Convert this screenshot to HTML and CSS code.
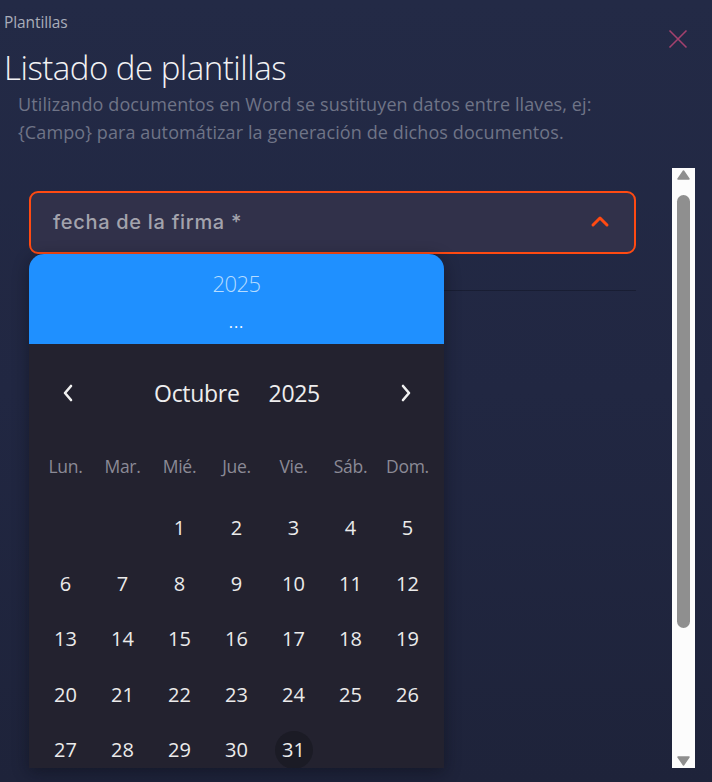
FILE: index.html
```html
<!DOCTYPE html>
<html lang="es">
<head>
<meta charset="utf-8">
<title>Plantillas</title>
<link rel="stylesheet" href="styles.css">
</head>
<body>
<div class="page">
  <header class="head">
    <div class="crumb-row">
      <span class="crumb">Plantillas</span>
      <button class="close" aria-label="Cerrar">
        <svg width="20" height="20" viewBox="0 0 20 20"><path d="M1.5 1.5 L18.5 18.5 M18.5 1.5 L1.5 18.5" stroke="#a3416e" stroke-width="1.6" fill="none"/></svg>
      </button>
    </div>
    <h1 class="title">Listado de plantillas</h1>
    <p class="desc">Utilizando documentos en Word se sustituyen datos entre llaves, ej:<br>{Campo} para automátizar la generación de dichos documentos.</p>
  </header>

  <section class="body">
    <div class="content">
      <div class="field">
        <span class="field-label">fecha de la firma *</span>
        <svg class="chev" width="20" height="14" viewBox="0 0 20 14"><polyline points="3,11 10,4 17,11" stroke="#ff4a12" stroke-width="3" fill="none" stroke-linecap="round" stroke-linejoin="round"/></svg>
      </div>
      <div class="divider"></div>

      <div class="picker">
        <div class="picker-head">
          <div class="ph-year">2025</div>
          <div class="ph-date">...</div>
        </div>
        <div class="picker-body">
          <div class="nav">
            <svg class="nav-btn" width="14" height="20" viewBox="0 0 14 20"><polyline points="10,3 4,10 10,17" stroke="#f0f0f0" stroke-width="2.6" fill="none" stroke-linecap="round" stroke-linejoin="round"/></svg>
            <div class="nav-title"><span>Octubre</span><span>2025</span></div>
            <svg class="nav-btn" width="14" height="20" viewBox="0 0 14 20"><polyline points="4,3 10,10 4,17" stroke="#f0f0f0" stroke-width="2.6" fill="none" stroke-linecap="round" stroke-linejoin="round"/></svg>
          </div>
          <div class="week">
            <span>Lun.</span><span>Mar.</span><span>Mié.</span><span>Jue.</span><span>Vie.</span><span>Sáb.</span><span>Dom.</span>
          </div>
          <div class="days">
            <span></span><span></span><span>1</span><span>2</span><span>3</span><span>4</span><span>5</span>
            <span>6</span><span>7</span><span>8</span><span>9</span><span>10</span><span>11</span><span>12</span>
            <span>13</span><span>14</span><span>15</span><span>16</span><span>17</span><span>18</span><span>19</span>
            <span>20</span><span>21</span><span>22</span><span>23</span><span>24</span><span>25</span><span>26</span>
            <span>27</span><span>28</span><span>29</span><span>30</span><span class="today">31</span><span></span><span></span>
          </div>
        </div>
      </div>
    </div>

    <div class="scrollbar">
      <svg width="23" height="14" viewBox="0 0 23 14"><polygon points="11.5,3 17,11 6,11" fill="#8f8f8f" stroke="#8f8f8f" stroke-width="1.5" stroke-linejoin="round"/></svg>
      <div class="track"><div class="thumb"></div></div>
      <svg width="23" height="14" viewBox="0 0 23 14"><polygon points="6,3 17,3 11.5,11" fill="#8f8f8f" stroke="#8f8f8f" stroke-width="1.5" stroke-linejoin="round"/></svg>
    </div>
  </section>
</div>
</body>
</html>
```

FILE: styles.css
```css
* { box-sizing: border-box; }

html, body {
  margin: 0;
  height: 100%;
}

body {
  background: linear-gradient(180deg, #232a46 0%, #212742 50%, #1e233a 100%);
  font-family: "Open Sans", "Noto Sans", sans-serif;
  overflow: hidden;
}

.page {
  width: 712px;
  height: 782px;
  display: flex;
  flex-direction: column;
}

.head {
  padding: 0 0 0 4px;
  flex: none;
}

.crumb-row {
  display: flex;
  justify-content: space-between;
  align-items: flex-start;
  height: 38px;
  padding-top: 11px;
}

.crumb {
  font-size: 15.5px;
  line-height: 22px;
  color: #a9adba;
  letter-spacing: -0.1px;
}

.close {
  background: none;
  border: 0;
  padding: 0;
  margin: 18px 24px 0 0;
  width: 20px;
  height: 20px;
  display: block;
}
.close svg { display: block; }

.title {
  margin: 10px 0 0 0;
  font-weight: 300;
  font-size: 33px;
  line-height: 40px;
  height: 42px;
  color: #f2f2f4;
  letter-spacing: -0.5px;
}

.desc {
  margin: 0 0 0 14px;
  font-size: 18px;
  line-height: 28px;
  color: #6f7487;
  letter-spacing: 0.1px;
}

.body {
  display: flex;
  margin-top: 22px;
  padding-right: 17px;
  flex: none;
  height: 600px;
}

.content {
  flex: 1;
  position: relative;
  padding: 23px 36px 0 29px;
}

.field {
  height: 63px;
  border: 2px solid #ff4a12;
  border-radius: 9px;
  background: #31314a;
  display: flex;
  align-items: center;
  justify-content: space-between;
  padding: 0 24px 0 22px;
}

.field-label {
  font-family: "Inter", "Lato", sans-serif;
  font-size: 20px;
  font-weight: 500;
  color: #a3a3ad;
  letter-spacing: 0.7px;
  margin-top: -2px;
}

.chev { display: block; margin-top: -3px; }

.divider {
  margin-top: 36px;
  height: 1px;
  background: rgba(10, 12, 24, 0.35);
}

.picker {
  position: absolute;
  left: 29px;
  top: 86px;
  width: 415px;
  height: 514px;
  border-radius: 15px 15px 0 0;
  overflow: hidden;
  box-shadow: 0 4px 16px rgba(8, 10, 20, 0.45);
  display: flex;
  flex-direction: column;
}

.picker-head {
  flex: none;
  height: 90px;
  background: #1f90ff;
  display: flex;
  flex-direction: column;
  align-items: center;
}

.ph-year {
  margin-top: 15px;
  font-size: 22px;
  font-weight: 300;
  line-height: 28px;
  color: #b6dcff;
  letter-spacing: -0.5px;
}

.ph-date {
  margin-top: 17px;
  font-size: 16px;
  line-height: 16px;
  color: #ffffff;
  letter-spacing: 1px;
}

.picker-body {
  flex: 1;
  background: #23222f;
  padding: 20px 8px 0 8px;
}

.nav {
  height: 58px;
  display: flex;
  align-items: center;
  justify-content: space-between;
  padding: 0 23px 0 24px;
}
.nav-btn { display: block; }

.nav-title {
  display: flex;
  gap: 29px;
  font-size: 23px;
  color: #eeeeee;
  letter-spacing: -0.3px;
}

.week {
  margin-top: 22px;
  height: 44px;
  display: grid;
  grid-template-columns: repeat(7, 57px);
  align-items: center;
  justify-items: center;
  font-size: 17.5px;
  color: #8b8a96;
  letter-spacing: -0.3px;
}

.days {
  margin-top: 12px;
  display: grid;
  grid-template-columns: repeat(7, 57px);
  grid-auto-rows: 55.5px;
  align-items: center;
  justify-items: center;
  font-size: 20px;
  color: #ebebeb;
}

.days span {
  width: 38px;
  height: 38px;
  display: flex;
  align-items: center;
  justify-content: center;
  border-radius: 50%;
}

.days .today {
  background: #1b1b25;
}

.scrollbar {
  width: 23px;
  height: 600px;
  background: #fcfcfc;
  display: flex;
  flex-direction: column;
  align-items: center;
}
.scrollbar svg { display: block; flex: none; }

.track {
  flex: 1;
  width: 100%;
  padding: 13px 5px 126px 5px;
}

.thumb {
  height: 100%;
  background: #8f8f8f;
  border-radius: 7px;
}
```
